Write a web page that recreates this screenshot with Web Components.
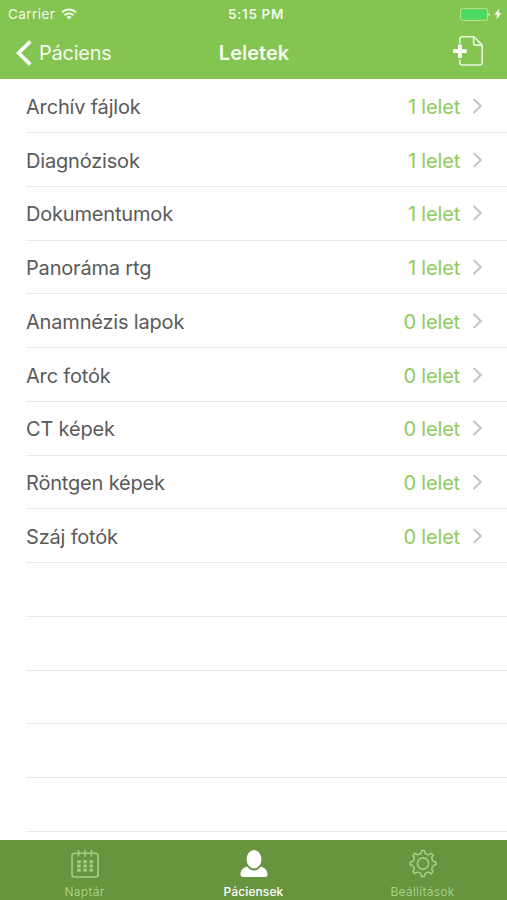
<!DOCTYPE html>
<html lang="hu">
<head>
<meta charset="utf-8">
<meta name="viewport" content="width=device-width, initial-scale=1">
<title>Leletek</title>
<style>
    html, body {
        margin: 0;
        height: 100%;
        overflow: hidden;
        background: #fff;
        font-family: Inter, "Liberation Sans", sans-serif;
    }
</style>
</head>
<body>
<app-container></app-container>

<script>
class StatusBar extends HTMLElement {
    constructor() {
        super();
        this.attachShadow({ mode: 'open' })
    }
    connectedCallback() {
        this.shadowRoot.innerHTML = `
        <style>
            :host {
                display: grid;
                grid-template-columns: 1fr auto 1fr;
                align-items: center;
                height: 27px;
                padding: 0 5px 0 8px;
                color: #f1fae8;
                font-size: 13.5px;
                line-height: 27px;
            }
            .left, .right { display: flex; align-items: center; }
            .left { gap: 6px; letter-spacing: .45px; }
            .left span, .time { padding-top: 1px; }
            .left svg { margin-bottom: 1px; }
            .right { justify-content: flex-end; gap: 3px; }
            .time { font-weight: 600; letter-spacing: .65px; padding-left: 2px; }
            svg { display: block; }
        </style>
        <div class="left">
            <span>Carrier</span>
            <svg width="16" height="12" viewBox="0 0 16 12" fill="none" stroke="currentColor" stroke-width="1.9">
                <path d="M1 4.4a10 10 0 0 1 14 0M3.6 7.2a6.3 6.3 0 0 1 8.8 0"/>
                <path d="M8 11.6 5.5 9.1a3.5 3.5 0 0 1 5 0z" fill="currentColor" stroke="none"/>
            </svg>
        </div>
        <span class="time">5:15 PM</span>
        <div class="right">
            <svg width="31" height="13" viewBox="0 0 31 13">
                <rect x=".6" y=".6" width="27" height="11.8" rx="2" fill="none" stroke="#b9e68f"/>
                <rect x="1.6" y="1.6" width="25" height="9.8" rx="1" fill="#4cd964"/>
                <path d="M28.6 4.5a2.2 2.2 0 0 1 0 4z" fill="#d9f3c3"/>
            </svg>
            <svg width="8" height="12" viewBox="0 0 8 12" fill="currentColor">
                <path d="M5.4 .3.4 6.7h2.8L2.2 11.7 7.5 5H4.6z"/>
            </svg>
        </div>
        `
    }
}
customElements.define('status-bar', StatusBar)

class NavBar extends HTMLElement {
    constructor() {
        super();
        this.attachShadow({ mode: 'open' })
    }
    connectedCallback() {
        this.shadowRoot.innerHTML = `
        <style>
            :host {
                display: grid;
                grid-template-columns: 1fr auto 1fr;
                align-items: center;
                height: 52px;
                padding: 0 16px;
                color: #f5fbef;
                font-size: 20px;
                line-height: 50px;
            }
            .back { display: flex; align-items: center; gap: 7px; letter-spacing: -.25px; }
            .title { font-weight: 600; padding-left: 1px; }
            .add { display: flex; justify-content: flex-end; margin: 0 7px 4px 0; }
            svg { display: block; }
        </style>
        <div class="back">
            <svg width="16" height="26" viewBox="0 0 16 26" fill="none" stroke="#fff" stroke-width="3.6">
                <path d="M14.3 1.5 2.6 13l11.7 11.5"/>
            </svg>
            <slot name="back"></slot>
        </div>
        <div class="title"><slot></slot></div>
        <div class="add">
            <svg width="32" height="32" viewBox="0 0 32 32" fill="none" stroke="#e9f7db" stroke-width="1.6">
                <path d="M7.8 8.5V4.2a2.5 2.5 0 0 1 2.5-2.5H22l8.2 8.4v17.5a2.4 2.4 0 0 1-2.4 2.4H10.3a2.5 2.5 0 0 1-2.5-2.5v-3"/>
                <path d="M21.6 2v6.3a1.8 1.8 0 0 0 1.8 1.8h6.6"/>
                <path d="M1 16.2h13.8M7.9 9.4V23" stroke="#fff" stroke-width="3.8"/>
            </svg>
        </div>
        `
    }
}
customElements.define('nav-bar', NavBar)

class ListRow extends HTMLElement {
    constructor() {
        super();
        this.attachShadow({ mode: 'open' })
    }
    connectedCallback() {
        const count = this.getAttribute('count');
        this.shadowRoot.innerHTML = `
        <style>
            :host {
                display: flex;
                align-items: center;
                box-sizing: border-box;
                height: 53.73px;
                margin-left: 26px;
                padding-right: 24px;
                border-bottom: 1px solid #e9e9ea;
                color: #5a5a5a;
                font-size: 20px;
                line-height: 52px;
                letter-spacing: -.18px;
                white-space: nowrap;
            }
            span { padding-top: 2px; }
            .name { flex: 1; }
            .count { color: #8fcb5c; margin-right: 12px; }
            svg { display: block; }
        </style>
        <span class="name"><slot></slot></span>
        ${count === null ? '' : `
        <span class="count">${count} lelet</span>
        <svg width="11" height="16" viewBox="0 0 11 16" fill="none" stroke="#c4c4c8" stroke-width="2">
            <path d="m1.5 1 7.3 7-7.3 7"/>
        </svg>`}
        `
    }
}
customElements.define('list-row', ListRow)

// outline of a cog wheel with rounded teeth
function cog(cx, cy, inner, outer, teeth) {
    const at = (r, a) => (cx + r * Math.sin(a)).toFixed(2) + ' ' + (cy - r * Math.cos(a)).toFixed(2);
    const step = 2 * Math.PI / teeth;
    let d = '';
    for (let i = 0; i < teeth; i++) {
        const a = i * step;
        d += (i ? 'L' : 'M') + at(outer, a - step * .13);
        d += 'L' + at(outer, a + step * .13);
        d += 'L' + at(inner + .5, a + step * .24);
        d += 'Q' + at(inner - .9, a + step * .5) + ' ' + at(inner + .5, a + step * .76);
    }
    return d + 'Z';
}

const icons = {
    calendar: `
        <rect x="1" y="3.3" width="26" height="23.7" rx="2.5"/>
        <path d="M7.5 0v6.5M14 0v6.5M20.5 0v6.5"/>
        <path d="M6.2 11.7h16M6.2 16h16M6.2 20.3h16" stroke-width="3" stroke-dasharray="3.5 2.6"/>`,
    person: `
        <g fill="currentColor" stroke="none">
            <ellipse cx="14" cy="9.2" rx="7.4" ry="9.2"/>
            <path d="M7.3 16.8c1.7 2.4 4 3.6 6.7 3.6s5-1.2 6.7-3.6c4 .6 6.8 3.6 6.8 7.7 0 1.5-.7 2.5-2.2 2.5H2.7C1.2 27 .5 26 .5 24.5c0-4.1 2.8-7.1 6.8-7.7z"/>
        </g>`,
    gear: `
        <path d="${cog(14, 13.5, 10.2, 13, 8)}"/>
        <circle cx="14" cy="13.5" r="5.6"/>`
};

class TabItem extends HTMLElement {
    constructor() {
        super();
        this.attachShadow({ mode: 'open' })
    }
    connectedCallback() {
        this.shadowRoot.innerHTML = `
        <style>
            :host {
                display: flex;
                flex-direction: column;
                align-items: center;
                flex: 1;
                color: #a5cf80;
                font-size: 12px;
                line-height: 14px;
                letter-spacing: .25px;
            }
            :host([active]) { color: #fff; font-weight: 500; letter-spacing: .1px; }
            svg { display: block; margin: 10px 0 7px; overflow: visible; }
        </style>
        <svg width="28" height="28" viewBox="0 0 28 28" fill="none" stroke="currentColor" stroke-width="1.6" stroke-linejoin="round">
            ${icons[this.getAttribute('icon')]}
        </svg>
        <slot></slot>
        `
    }
}
customElements.define('tab-item', TabItem)

class App extends HTMLElement {
    constructor() {
        super();
        this.attachShadow({ mode: 'open' })
    }
    connectedCallback() {
        this.shadowRoot.innerHTML = `
        <style>
            :host {
                display: flex;
                flex-direction: column;
                height: 100vh;
            }
            header { flex: none; background: #84c450; }
            main { flex: 1; min-height: 0; padding-top: .6px; overflow: hidden; }
            footer {
                flex: none;
                display: flex;
                height: 60px;
                background: #689440;
            }
        </style>
        <header>
            <status-bar></status-bar>
            <nav-bar><span slot="back">Páciens</span>Leletek</nav-bar>
        </header>
        <main>
            <list-row count="1">Archív fájlok</list-row>
            <list-row count="1">Diagnózisok</list-row>
            <list-row count="1">Dokumentumok</list-row>
            <list-row count="1">Panoráma rtg</list-row>
            <list-row count="0">Anamnézis lapok</list-row>
            <list-row count="0">Arc fotók</list-row>
            <list-row count="0">CT képek</list-row>
            <list-row count="0">Röntgen képek</list-row>
            <list-row count="0">Száj fotók</list-row>
            <list-row></list-row>
            <list-row></list-row>
            <list-row></list-row>
            <list-row></list-row>
            <list-row></list-row>
        </main>
        <footer>
            <tab-item icon="calendar">Naptár</tab-item>
            <tab-item icon="person" active>Páciensek</tab-item>
            <tab-item icon="gear">Beállítások</tab-item>
        </footer>
        `
    }
}
customElements.define('app-container', App)
</script>
</body>
</html>
